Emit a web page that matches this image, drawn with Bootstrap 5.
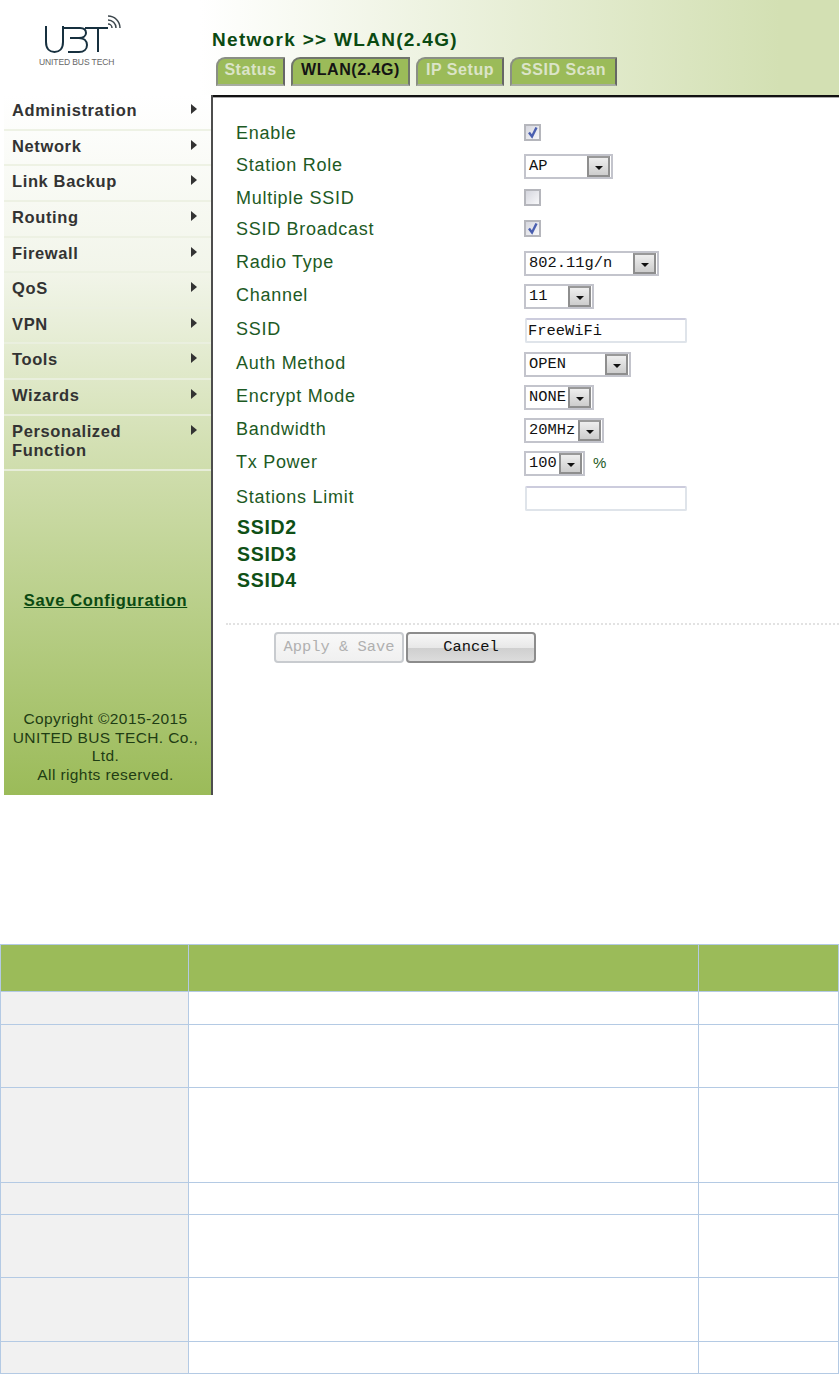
<!DOCTYPE html>
<html lang="en"><head><meta charset="utf-8"><title>WLAN</title>
<link rel="stylesheet" href="https://cdn.jsdelivr.net/npm/bootstrap@5.3.0/dist/css/bootstrap.min.css">
<style>
html,body{background:#fff;margin:0}
body{font-family:"Liberation Sans",Arial,sans-serif;width:839px;overflow-x:hidden}
.scr{height:795px;position:relative}
.tophead{height:96px;background:linear-gradient(90deg,#fff 0,#fff 200px,#d3e0b3 780px,#d3e0b3 100%)}
.logobox{width:212px;padding-left:41px;padding-top:13px}
.logobox svg{display:block;overflow:visible}
.logotxt{font-size:8.500px;letter-spacing:-.1px;color:#666;line-height:9px;margin-left:-2px;margin-top:5px;white-space:nowrap}
.headr{padding-top:30px}
.pgtitle{font-size:19px;font-weight:700;color:#0b4a12;line-height:20px;letter-spacing:1.3px;white-space:nowrap}
.tabrow{margin:7px 0 0 4px;gap:6px;flex-wrap:nowrap}
.tabby{display:block;height:29px;padding:0;text-align:center;line-height:22px;font-size:16px;font-weight:700;letter-spacing:.55px;background:#9bbb59;color:#dbe4c8;border:2px solid #8a8f84;border-right-color:#666;border-bottom-color:#a7ada0;border-top-left-radius:9px;text-decoration:none;white-space:nowrap}
.tabby.on{color:#141414;border-color:#70756b;border-bottom-color:#a0a69a}
.t1{width:69px}.t2{width:119px}.t3{width:88px}.t4{width:107px}
.bodyrow{height:699px}
.sidebar{width:209px;margin-left:4px;background:linear-gradient(180deg,#fff 0,#f2f5ea 25%,#d3e0b3 50%,#9bbb59 100%);border-right:2px solid #4d4d4d;position:relative;margin-top:-1px;height:700px;flex:none}
.mitem{display:flex;justify-content:space-between;font-size:16.5px;font-weight:700;letter-spacing:.62px;color:#333;line-height:19px;padding:6px 14px 0 8px;height:35.65px;border-bottom:2px solid rgba(235,240,225,.85)}
.mitem.two{height:55px}
.mname{display:block}
.tri{width:0;height:0;border-left:6px solid #333;border-top:5px solid transparent;border-bottom:5px solid transparent;margin-top:3px;flex:none}
.savelink{position:absolute;left:0;right:4px;top:495px;text-align:center;font-size:16.5px;font-weight:700;letter-spacing:.68px;color:#0b4a12;text-decoration:underline;line-height:20px}
.copy{position:absolute;left:0;right:4px;top:615px;text-align:center;font-size:15.5px;letter-spacing:.4px;line-height:18.6px;color:#1f3d14;white-space:nowrap}
.mainp{flex:1;border-top:2px solid #111;margin-top:-1px;position:relative;padding:18.5px 0 0 23px;box-shadow:inset 0 1px 0 #aaa}
.frow{display:flex;align-items:flex-start}
.flab{width:288px;height:34px;display:flex;align-items:center;font-size:18px;letter-spacing:.72px;color:#1d5a24;white-space:nowrap;padding-top:2px}
.flab.up{padding-top:0;padding-bottom:3px}
.fval{height:34px;display:flex;align-items:center}
.r31{height:31px}.r33{height:33px}.r34{height:34px}.r35{height:35px}
.cbx{width:17px;height:17px;border:2px solid #b5b6bc;background:linear-gradient(135deg,#d5d6de,#f8f8fa);display:block;position:relative;padding:0}
.cbx svg{display:block;position:absolute;left:0;top:0}
.seldrop{display:flex;height:25px;border:2px solid #c3c4cc;background:#fff;font-family:"Liberation Mono",monospace;font-size:15.4px;color:#111;line-height:21px;padding:0 1px 0 3px;justify-content:space-between}
.sarrow{width:23px;height:21px;background:linear-gradient(180deg,#eee,#cdcdcd);border:2px solid #8e8e8e;border-top-color:#999;position:relative;flex:none}
.sarrow::after{content:"";position:absolute;left:5.500px;top:8px;border-left:4px solid transparent;border-right:4px solid transparent;border-top:4px solid #111}
.w88{width:89px}.w135{width:135px}.w70{width:70px}.w107{width:107px}.w80{width:80px}.w61{width:61px}
.txtin{width:162px;height:25px;margin-left:1px;border:2px solid #dfe4ea;border-top-color:#ccd;border-radius:2px;font-family:"Liberation Mono",monospace;font-size:15.4px;color:#111;padding:0 0 0 1px;line-height:21px;background:#fff;outline:0}
.pct{margin-left:8px;font-size:15px;color:#1d5a24}
.ssidgrp{margin-top:-1.500px}
.ssidh{font-size:19.5px;font-weight:700;color:#0f5016;line-height:26.500px;letter-spacing:.7px;padding-left:1px}
.dots{border-top:2px dotted #e2e2e2;margin:29px 0 0 -10px;height:0}
.btnrow{margin:7px 0 0 38px;gap:2px}
.ubtn{width:130px;height:31px;font-family:"Liberation Mono",monospace;font-size:15.4px;line-height:25px;border-radius:4px;padding:0;text-align:center}
.ubtn.off{border:2px solid #c8cbcf;background:linear-gradient(180deg,#f8f8f8,#f0f0f0);color:#b0b0b0}
.ubtn.go{border:2px solid #8c8c8c;background:linear-gradient(180deg,#f7f7f7 0,#e8e8e8 50%,#cfcfcf 52%,#dcdcdc 100%);color:#111}
.gaptbl{height:149px}
.spec{width:839px;table-layout:fixed;border-collapse:collapse;margin:0}
.spec td{border:1px solid #b4cae4;padding:0;background:#fff}
.spec .head td{background:#9bbb59}
.spec td.gr{background:#f1f1f1}
.c1{width:188px}.c2{width:510px}
.h47{height:47px}.h33{height:33px}.h63{height:63px}.h64{height:64px}.h95{height:95px}.h32{height:32px}
</style></head><body>
<div class="scr d-flex flex-column">
 <div class="tophead d-flex">
  <div class="logobox">
   <svg width="82" height="40" viewBox="0 0 82 40" fill="none"><path d="M5 13V29C5 36 9 39 13.500 39C18 39 22 36 22 29V13" stroke="#17303f" stroke-width="2"/><path d="M22 15H39C44 15 45 18 45 20C45 23 42 25 38 25H29M38 25C43 25 46 28 46 32C46 36 43 39 38 39H27" stroke="#17303f" stroke-width="2"/><path d="M44 15H67M57 15V39" stroke="#17303f" stroke-width="2"/><path d="M67 3A12 12 0 0 1 79 15M67 7A8 8 0 0 1 75 15M67 11A4 4 0 0 1 71 15" stroke="#3c464c" stroke-width="1.500"/></svg>
   <div class="logotxt">UNITED BUS TECH</div>
  </div>
  <div class="headr">
   <div class="pgtitle">Network &gt;&gt; WLAN(2.4G)</div>
   <ul class="nav tabrow">
    <li class="nav-item"><a class="tabby t1" href="#">Status</a></li>
    <li class="nav-item"><a class="tabby t2 on" href="#">WLAN(2.4G)</a></li>
    <li class="nav-item"><a class="tabby t3" href="#">IP Setup</a></li>
    <li class="nav-item"><a class="tabby t4" href="#">SSID Scan</a></li>
   </ul>
  </div>
 </div>
 <div class="bodyrow d-flex">
  <div class="sidebar">
   <div class="mitem"><span class="mname">Administration</span><i class="tri"></i></div>
   <div class="mitem"><span class="mname">Network</span><i class="tri"></i></div>
   <div class="mitem"><span class="mname">Link Backup</span><i class="tri"></i></div>
   <div class="mitem"><span class="mname">Routing</span><i class="tri"></i></div>
   <div class="mitem"><span class="mname">Firewall</span><i class="tri"></i></div>
   <div class="mitem"><span class="mname">QoS</span><i class="tri"></i></div>
   <div class="mitem"><span class="mname">VPN</span><i class="tri"></i></div>
   <div class="mitem"><span class="mname">Tools</span><i class="tri"></i></div>
   <div class="mitem"><span class="mname">Wizards</span><i class="tri"></i></div>
   <div class="mitem two"><span class="mname">Personalized<br>Function</span><i class="tri"></i></div>
   <a class="savelink" href="#">Save Configuration</a>
   <div class="copy">Copyright ©2015-2015<br>UNITED BUS TECH. Co.,<br>Ltd.<br>All rights reserved.</div>
  </div>
  <div class="mainp">
   <div class="frow r34"><div class="flab">Enable</div><div class="fval"><span class="cbx"><svg width="13" height="13" viewBox="0 0 13 13" fill="none"><path d="M3 6.500L6 10.500L10.500 1.500" stroke="#4a5fb0" stroke-width="2.400"/></svg></span></div></div>
   <div class="frow r31"><div class="flab up">Station Role</div><div class="fval"><div class="seldrop w88"><span>AP</span><i class="sarrow"></i></div></div></div>
   <div class="frow r31"><div class="flab">Multiple SSID</div><div class="fval"><span class="cbx"></span></div></div>
   <div class="frow r35"><div class="flab">SSID Broadcast</div><div class="fval"><span class="cbx"><svg width="13" height="13" viewBox="0 0 13 13" fill="none"><path d="M3 6.500L6 10.500L10.500 1.500" stroke="#4a5fb0" stroke-width="2.400"/></svg></span></div></div>
   <div class="frow r33"><div class="flab up">Radio Type</div><div class="fval"><div class="seldrop w135"><span>802.11g/n</span><i class="sarrow"></i></div></div></div>
   <div class="frow r34"><div class="flab up">Channel</div><div class="fval"><div class="seldrop w70"><span>11</span><i class="sarrow"></i></div></div></div>
   <div class="frow r34"><div class="flab up">SSID</div><div class="fval"><input class="txtin" type="text" value="FreeWiFi"></div></div>
   <div class="frow r33"><div class="flab up">Auth Method</div><div class="fval"><div class="seldrop w107"><span>OPEN</span><i class="sarrow"></i></div></div></div>
   <div class="frow r33"><div class="flab up">Encrypt Mode</div><div class="fval"><div class="seldrop w70"><span>NONE</span><i class="sarrow"></i></div></div></div>
   <div class="frow r33"><div class="flab up">Bandwidth</div><div class="fval"><div class="seldrop w80"><span>20MHz</span><i class="sarrow"></i></div></div></div>
   <div class="frow r35"><div class="flab up">Tx Power</div><div class="fval"><div class="seldrop w61"><span>100</span><i class="sarrow"></i></div><span class="pct">%</span></div></div>
   <div class="frow r34"><div class="flab up">Stations Limit</div><div class="fval"><input class="txtin" type="text"></div></div>
   <div class="ssidgrp">
    <div class="ssidh">SSID2</div><div class="ssidh">SSID3</div><div class="ssidh">SSID4</div>
   </div>
   <div class="dots"></div>
   <div class="d-flex btnrow">
    <button class="ubtn off" type="button" disabled>Apply &amp; Save</button>
    <button class="ubtn go" type="button">Cancel</button>
   </div>
  </div>
 </div>
</div>
<div class="gaptbl"></div>
<table class="spec">
 <colgroup><col class="c1"><col class="c2"><col></colgroup>
 <tr class="head h47"><td></td><td></td><td></td></tr>
 <tr class="h33"><td class="gr"></td><td></td><td></td></tr>
 <tr class="h63"><td class="gr"></td><td></td><td></td></tr>
 <tr class="h95"><td class="gr"></td><td></td><td></td></tr>
 <tr class="h32"><td class="gr"></td><td></td><td></td></tr>
 <tr class="h63"><td class="gr"></td><td></td><td></td></tr>
 <tr class="h64"><td class="gr"></td><td></td><td></td></tr>
 <tr class="h32"><td class="gr"></td><td></td><td></td></tr>
</table>
<script src="https://cdn.jsdelivr.net/npm/bootstrap@5.3.0/dist/js/bootstrap.bundle.min.js"></script>
</body></html>
